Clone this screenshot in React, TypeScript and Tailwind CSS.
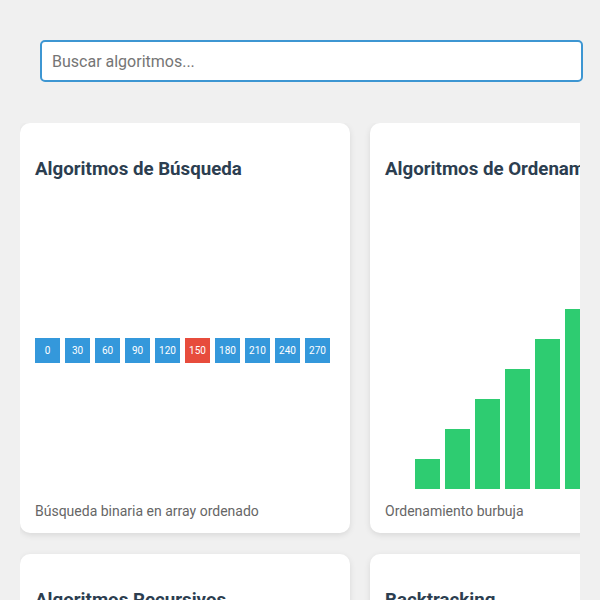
import { useState } from "react";

type Algo = { id: string; title: string; description: string; kind: "search" | "sort" | "none" };

const algos: Algo[] = [
  { id: "busqueda", title: "Algoritmos de Búsqueda", description: "Búsqueda binaria en array ordenado", kind: "search" },
  { id: "ordenamiento", title: "Algoritmos de Ordenamiento", description: "Ordenamiento burbuja", kind: "sort" },
  { id: "recursivos", title: "Algoritmos Recursivos", description: "Torres de Hanoi", kind: "none" },
  { id: "backtracking", title: "Backtracking", description: "Problema de las N reinas", kind: "none" },
];

const values = Array.from({ length: 10 }, (_, i) => i * 30);

function SearchViz() {
  const target = 150;
  return (
    <div className="flex h-full items-center gap-[5px] pt-[12px]">
      {values.map((v) => (
        <div
          key={v}
          className={
            v === target
              ? "flex h-[25px] w-[25px] shrink-0 items-center justify-center bg-[#e74c3c] text-[10px] text-white"
              : "flex h-[25px] w-[25px] shrink-0 items-center justify-center bg-[#3498db] text-[10px] text-white"
          }
        >
          {v}
        </div>
      ))}
    </div>
  );
}

function SortViz() {
  return (
    <div className="flex h-full items-end gap-[5px]">
      {values.map((v) => (
        <div key={v} className="w-[25px] shrink-0 bg-[#2ecc71]" style={{ height: v }} />
      ))}
    </div>
  );
}

function Card({ algo }: { algo: Algo }) {
  return (
    <div className="rounded-[10px] bg-white px-[15px] pt-[15px] pb-[14px] shadow-[0_2px_6px_rgba(0,0,0,0.1)]">
      <h3 className="mt-[20.5px] mb-[18.72px] text-[18.72px] font-bold leading-[1.17] text-[#2c3e50]">{algo.title}</h3>
      <div className="h-[290px] overflow-hidden">
        {algo.kind === "search" && <SearchViz />}
        {algo.kind === "sort" && <SortViz />}
      </div>
      <p className="mt-[14px] text-[14px] leading-[1.17] text-[#666]">{algo.description}</p>
    </div>
  );
}

export default function App() {
  const [query, setQuery] = useState("");
  const shown = algos.filter((a) => a.title.toLowerCase().includes(query.toLowerCase()));

  return (
    <div className="min-h-screen bg-[#f0f0f0] pt-10 font-['Roboto',sans-serif]">
      <div className="pl-10 pr-[17px]">
        <input
          value={query}
          onChange={(e) => setQuery(e.target.value)}
          placeholder="Buscar algoritmos..."
          className="h-[42px] w-full rounded-[5px] border-2 border-[#3d96d2] bg-white px-[10px] text-[16px] text-[#333] outline-none placeholder:text-[#757575]"
        />
      </div>
      <div className="mx-5 mt-[41px] overflow-hidden">
        <div className="grid grid-cols-[330px_330px] gap-x-5 gap-y-[21px] pb-5">
          {shown.map((a) => (
            <Card key={a.id} algo={a} />
          ))}
        </div>
      </div>
    </div>
  );
}
